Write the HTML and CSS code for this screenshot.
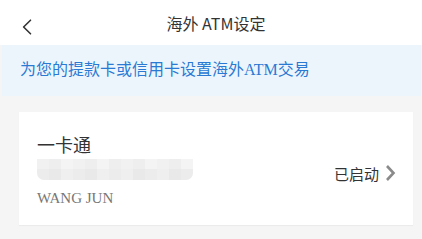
FILE: index.html
```html
<!DOCTYPE html>
<html lang="zh-CN">
<head>
<meta charset="utf-8">
<title>海外ATM设定</title>
<link rel="stylesheet" href="styles.css">
</head>
<body>
<header class="nav">
  <svg class="back" width="12" height="16" viewBox="0 0 12 16"><path d="M9.5 1.2 L2.6 8 L9.5 14.8" fill="none" stroke="#333" stroke-width="1.6" stroke-linecap="round" stroke-linejoin="round"/></svg>
  <h1 class="title">海外 ATM设定</h1>
</header>
<div class="banner">为您的提款卡或信用卡设置海外<span class="latin">ATM</span>交易</div>
<main class="content">
  <section class="card">
    <div class="info">
      <div class="name">一卡通</div>
      <div class="mosaic">
        <i class="c1"></i><i class="c2 tall"></i><i class="c3 tall"></i><i class="c1"></i><i class="c2"></i><i class="c3"></i><i class="c2"></i><i class="c1"></i><i class="c2"></i><i class="c3"></i><i class="c1"></i><i class="c2"></i><i class="c3"></i>
        <i class="d2"></i><i class="d1"></i><i class="d3"></i><i class="d2"></i><i class="d1"></i><i class="d3"></i><i class="d2"></i><i class="d3"></i><i class="d1"></i><i class="d2"></i><i class="d3"></i><i class="d1"></i><i class="d2"></i>
      </div>
      <div class="holder">WANG JUN</div>
    </div>
    <div class="status">
      <span>已启动</span>
      <svg class="arrow" width="11" height="18" viewBox="0 0 11 18"><path d="M2 2 L8.5 9 L2 16" fill="none" stroke="#8a8a8a" stroke-width="2.6" stroke-linejoin="miter"/></svg>
    </div>
  </section>
</main>
</body>
</html>
```
FILE: styles.css
```css
html, body {
  margin: 0;
  padding: 0;
}
body {
  width: 422px;
  height: 239px;
  overflow: hidden;
  background: #f5f5f5;
  font-family: "Noto Sans CJK SC", "Noto Sans", sans-serif;
  color: #333;
}
.nav {
  height: 45px;
  background: #fff;
  display: flex;
  align-items: center;
  justify-content: center;
  position: relative;
}
.back {
  position: absolute;
  left: 21px;
  top: 19px;
}
.title {
  margin: 0 0 0 10px;
  font-size: 16px;
  font-weight: 400;
  line-height: 22px;
  color: #333;
}
.banner {
  margin-left: 2px;
  margin-right: 1px;
  height: 51px;
  background: #edf5fc;
  color: #2a7ad4;
  font-size: 16px;
  padding-left: 18px;
  padding-bottom: 4px;
  box-sizing: border-box;
  line-height: 47px;
}
.latin {
  font-family: "Liberation Serif", serif;
}
.content {
  padding: 16px 9px 0 19px;
}
.card {
  background: #fff;
  display: flex;
  justify-content: space-between;
  align-items: center;
  padding: 22px 17px 18px 18px;
  box-shadow: 0 1px 1px rgba(0,0,0,0.04);
}
.name {
  font-size: 18px;
  line-height: 21px;
  color: #333;
}
.mosaic {
  margin-top: 4px;
  width: 156px;
  height: 21px;
  display: grid;
  grid-template-columns: repeat(13, 12px);
  grid-template-rows: 10px 11px;
  border-radius: 0 0 7px 7px;
  overflow: hidden;
}
.mosaic i { display: block; }
.c1 { background: #f1f1f1; }
.c2 { background: #eeeeee; }
.c3 { background: #f4f4f4; }
.d1 { background: #e9e9e9; }
.d2 { background: #ececec; }
.d3 { background: #efefef; }
.holder {
  margin-top: 9px;
  font-family: "Liberation Serif", serif;
  font-size: 15px;
  line-height: 18px;
  color: #777;
}
.status {
  display: flex;
  align-items: center;
  gap: 6px;
  font-size: 15px;
  color: #333;
  padding-top: 5px;
}
.arrow {
  display: block;
}
```
